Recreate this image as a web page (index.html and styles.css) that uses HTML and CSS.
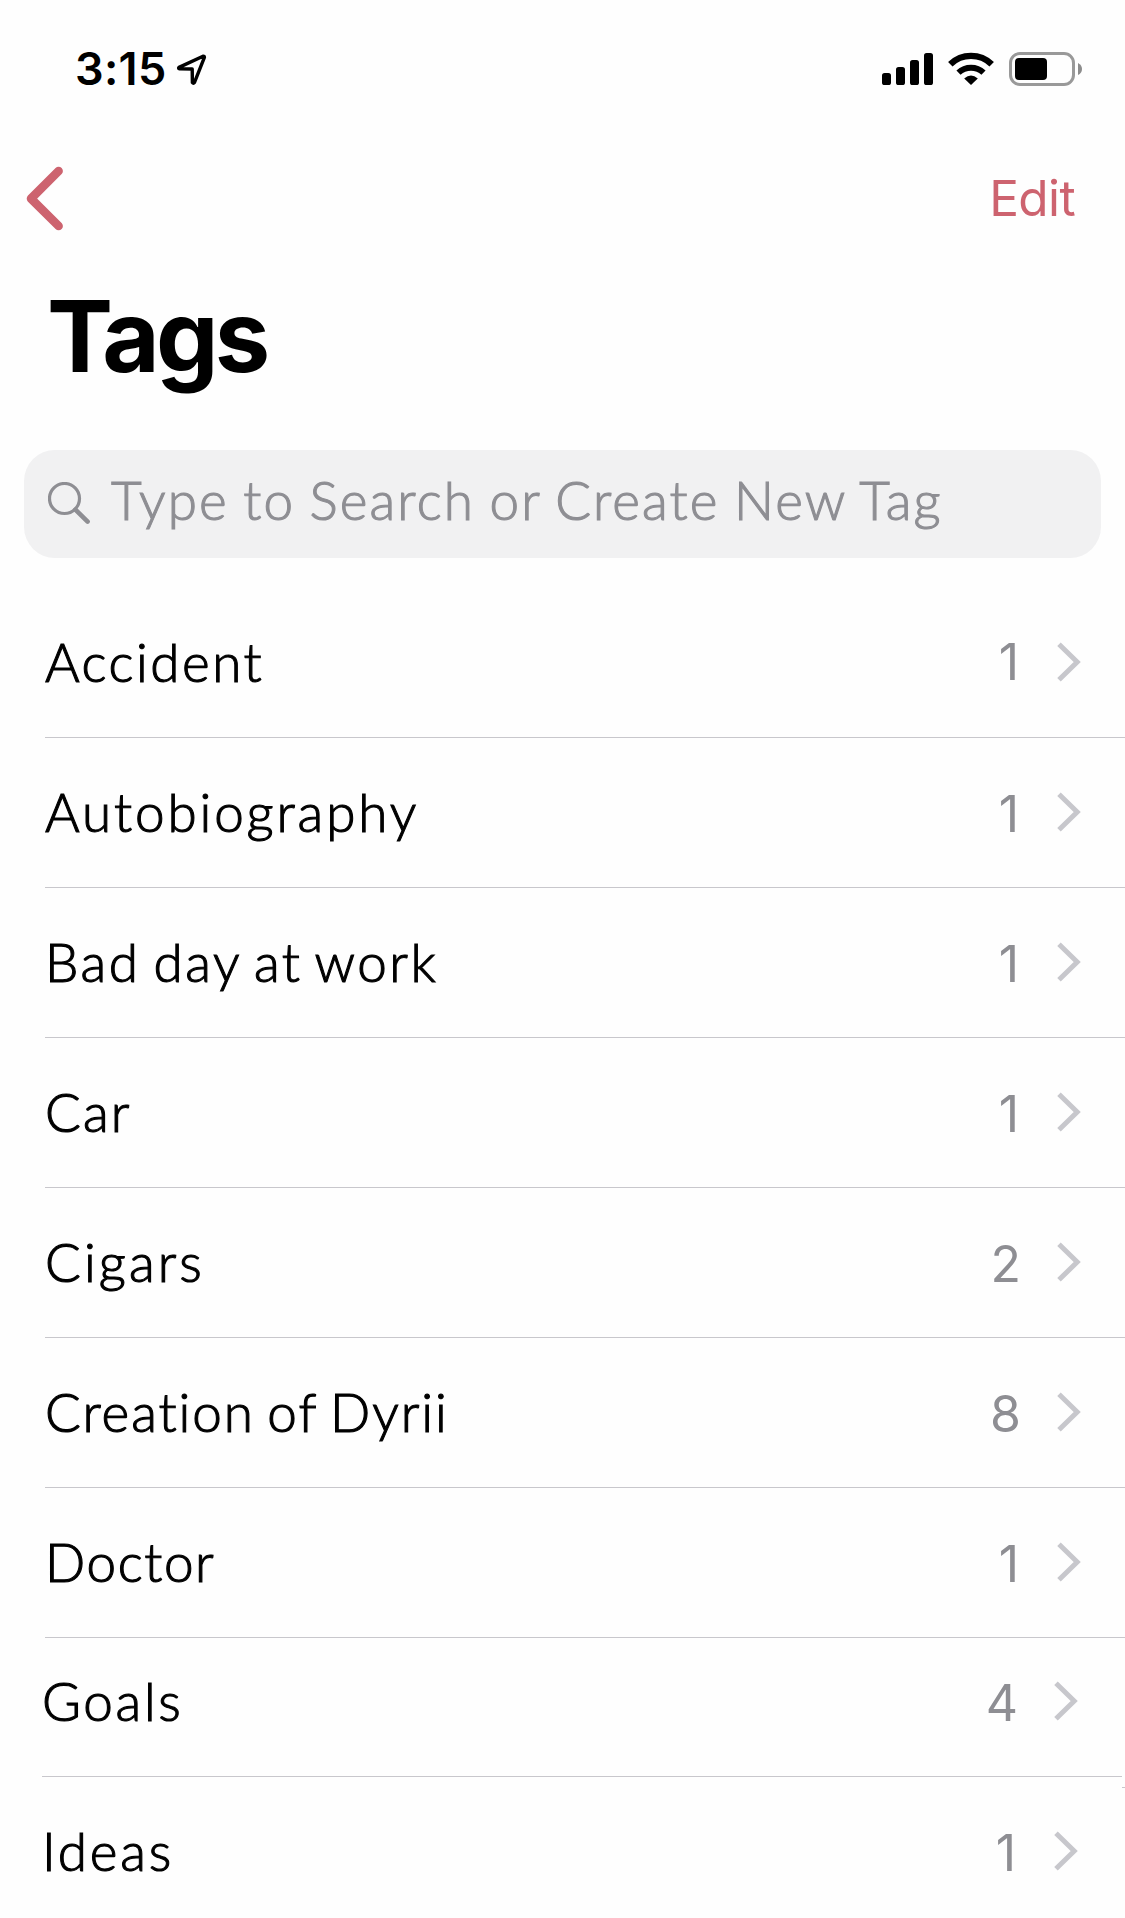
FILE: index.html
```html
<!DOCTYPE html>
<html lang="en">
<head>
<meta charset="utf-8">
<title>Tags</title>
<link rel="stylesheet" href="styles.css">
</head>
<body>
<svg class="defs" aria-hidden="true"><symbol id="chevron" viewBox="0 0 24 40"><path d="M2 2.2 L20.2 20 L2 37.8" fill="none" stroke="#c7c7cc" stroke-width="5"/></symbol></svg>
<header class="status">
  <span class="time">3:15</span>
  <svg class="location" width="32" height="32" viewBox="0 0 32 32"><path d="M27 3.2 L3 14.4 Q2 15.6 3.6 15.9 L16.2 16 L16.4 29.6 Q17.4 31 18.4 29.6 L28.4 4.4 Q28.4 3 27 3.2 Z" fill="none" stroke="#000" stroke-width="3.4" stroke-linejoin="round"/></svg>
  <svg class="signal" width="52" height="34" viewBox="0 0 52 34"><rect x="0" y="21" width="9" height="12" rx="2.6"/><rect x="14" y="15" width="9" height="18" rx="2.6"/><rect x="28" y="8" width="9" height="25" rx="2.6"/><rect x="42" y="1" width="9" height="32" rx="2.6"/></svg>
  <svg class="wifi" width="46" height="34" viewBox="0 0 46 34"><path d="M2.3 12.2 A29.8 29.8 0 0 1 43.7 12.2" fill="none" stroke="#000" stroke-width="6.4"/><path d="M10.5 20.7 A18 18 0 0 1 35.5 20.7" fill="none" stroke="#000" stroke-width="6"/><path d="M16.2 26.5 Q23 20.3 29.8 26.5 L23 33 Z"/></svg>
  <svg class="battery" width="74" height="34" viewBox="0 0 74 34"><rect x="1.5" y="1.5" width="63" height="31" rx="9.5" fill="none" stroke="#999" stroke-width="3"/><rect x="6" y="6" width="32" height="22" rx="4"/><path d="M69 11 Q73 13 73 17 Q73 21 69 23 Z" fill="#8c8c8c"/></svg>
</header>
<nav class="nav">
  <svg class="back" width="40" height="66" viewBox="0 0 40 66"><path d="M34.6 6 L7 33.6 L34.6 61" fill="none" stroke="#cd636f" stroke-width="8.6" stroke-linecap="round" stroke-linejoin="round"/></svg>
  <span class="edit">Edit</span>
</nav>
<h1 class="title">Tags</h1>
<div class="search">
  <svg class="glass" width="44" height="44" viewBox="0 0 44 44"><circle cx="16.5" cy="16.5" r="15" fill="none" stroke="#8e8e93" stroke-width="3.2"/><path d="M27.4 27.6 L39.6 39.6" stroke="#8e8e93" stroke-width="4.6" stroke-linecap="round"/></svg>
  <span class="placeholder">Type to Search or Create New Tag</span>
</div>
<main class="list">
  <div class="row first"><span class="name accident">Accident</span><span class="count">1</span><svg class="chev"><use href="#chevron"/></svg></div>
  <div class="row"><span class="name autobiography">Autobiography</span><span class="count">1</span><svg class="chev"><use href="#chevron"/></svg></div>
  <div class="row"><span class="name bad-day">Bad day at work</span><span class="count">1</span><svg class="chev"><use href="#chevron"/></svg></div>
  <div class="row"><span class="name car">Car</span><span class="count">1</span><svg class="chev"><use href="#chevron"/></svg></div>
  <div class="row"><span class="name cigars">Cigars</span><span class="count wide">2</span><svg class="chev"><use href="#chevron"/></svg></div>
  <div class="row"><span class="name creation">Creation of Dyrii</span><span class="count wide">8</span><svg class="chev"><use href="#chevron"/></svg></div>
  <div class="row"><span class="name doctor">Doctor</span><span class="count">1</span><svg class="chev"><use href="#chevron"/></svg></div>
  <div class="row shifted short"><span class="name goals">Goals</span><span class="count wide">4</span><svg class="chev"><use href="#chevron"/></svg></div>
  <div class="row shifted"><span class="name ideas">Ideas</span><span class="count">1</span><svg class="chev"><use href="#chevron"/></svg></div>
</main>
</body>
</html>
```
FILE: styles.css
```css
* { box-sizing: border-box; }
html, body { margin: 0; height: 1918px; overflow: hidden; background: #fefefe; }
body { font-family: Inter, "Liberation Sans", sans-serif; color: #000; }
.defs { display: none; }

.status { display: flex; align-items: flex-start; height: 140px; padding: 52px 42px 0 75px; }
.time { width: 101px; font-size: 45px; line-height: 34px; font-weight: 600; letter-spacing: 0.3px; white-space: nowrap; }
.location { margin: 1px auto 0 0; }
.signal { margin-right: 14px; }
.wifi { margin-right: 15px; }

.nav { display: flex; justify-content: space-between; height: 140px; padding: 25px 50px 0 24px; }
.edit { font-size: 49.5px; line-height: 66px; letter-spacing: -0.6px; color: #cd636f; }

.title { height: 170px; margin: 0; padding: 0 47px; font-size: 99px; line-height: 112px; font-weight: 700; letter-spacing: -3.7px; }

.search { display: flex; align-items: flex-start; height: 108px; margin: 0 24px; padding: 32px 24px 0; border-radius: 31px; background: #f1f1f2; }
.glass { flex: none; }
.placeholder { margin: -15px 0 0 19px; font: 300 53px/66px Lato, sans-serif; letter-spacing: 2.1px; word-spacing: -2px; color: #8e8e93; -webkit-text-stroke: 1.1px #8e8e93; white-space: nowrap; }

.list { padding-top: 30px; }
.row { position: relative; display: flex; align-items: flex-start; height: 150px; margin-left: 45px; padding: 41px 44px 0 0; border-bottom: 1px solid #c8c7cc; }
.shifted { margin-left: 42px; margin-right: 3px; }
.short { height: 139px; padding-top: 30px; }
.short::after { content: ""; position: absolute; right: -3px; bottom: -12px; width: 3px; height: 1px; background: #c8c7cc; }
.name { font: 300 53px/66px Lato, sans-serif; letter-spacing: 1.6px; white-space: nowrap; -webkit-text-stroke: 1.1px #000; }
.accident { letter-spacing: 2.5px; }
.autobiography { letter-spacing: 2.9px; }
.bad-day { letter-spacing: 2.5px; word-spacing: -3.7px; }
.car { letter-spacing: 2.1px; }
.cigars { letter-spacing: 3.1px; }
.creation { letter-spacing: 1.9px; word-spacing: -3.6px; }
.doctor { letter-spacing: 1.6px; }
.goals { letter-spacing: 2.7px; }
.ideas { letter-spacing: 2.8px; }
.count { margin: 2px 0 0 auto; font-size: 50px; line-height: 66px; color: #8e8e93; }
.first .count { margin-top: 0; }
.chev { width: 24px; height: 40px; margin: 13px 0 0 38px; }
.wide + .chev { margin-left: 36px; }
```
